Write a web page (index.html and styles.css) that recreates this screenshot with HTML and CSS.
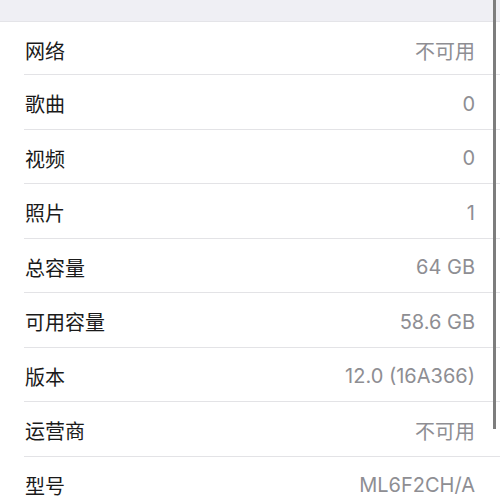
FILE: index.html
```html
<!DOCTYPE html>
<html lang="zh-CN">
<head>
    <meta charset="UTF-8">
    <meta name="viewport" content="width=device-width, initial-scale=1.0">
    <title>关于本机</title>
    <link rel="stylesheet" href="styles.css">
</head>
<body>
    <div class="topBand"></div>
    <ul class="infoList">
        <li class="infoRow"><span class="label">网络</span><span class="value">不可用</span></li>
        <li class="infoRow"><span class="label">歌曲</span><span class="value">0</span></li>
        <li class="infoRow"><span class="label">视频</span><span class="value">0</span></li>
        <li class="infoRow"><span class="label">照片</span><span class="value">1</span></li>
        <li class="infoRow"><span class="label">总容量</span><span class="value">64 GB</span></li>
        <li class="infoRow"><span class="label">可用容量</span><span class="value">58.6 GB</span></li>
        <li class="infoRow"><span class="label">版本</span><span class="value">12.0 (16A366)</span></li>
        <li class="infoRow"><span class="label">运营商</span><span class="value">不可用</span></li>
        <li class="infoRow"><span class="label">型号</span><span class="value">ML6F2CH/A</span></li>
    </ul>
    <div class="scrollBar"></div>
</body>
</html>
```

FILE: styles.css
```css
body {
    margin: 0;
    background-color: #fff;
    font-family: Inter, "Noto Sans CJK SC", sans-serif;
    overflow: hidden;
}
.topBand {
    height: 21px;
    background-color: #efeff4;
    border-bottom: 1px solid #e4e4e8;
}
.infoList {
    list-style: none;
    margin: 0;
    padding: 0 0 0 24px;
}
.infoRow {
    display: flex;
    justify-content: space-between;
    align-items: center;
    height: 54.5px;
    padding: 4px 25px 0 1px;
    box-sizing: border-box;
    border-bottom: 1px solid #e3e3e6;
    font-size: 20px;
}
.infoRow:first-child {
    height: 53px;
}
.label {
    color: #1a1a1a;
}
.value {
    color: #8e8e93;
}
.scrollBar {
    position: absolute;
    left: 493px;
    top: 0;
    width: 3px;
    height: 429px;
    background-color: #7d7d7d;
}
```
